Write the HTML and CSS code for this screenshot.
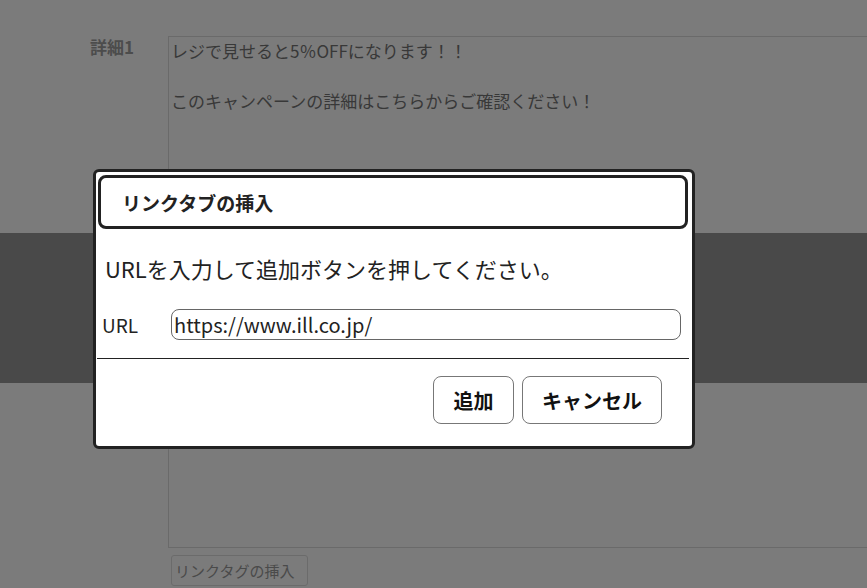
FILE: index.html
```html
<!DOCTYPE html>
<html lang="ja">
<head>
<meta charset="utf-8">
<link rel="stylesheet" href="styles.css">
</head>
<body>
<div class="page">
  <div class="form-row">
    <div class="label">詳細1</div>
    <div class="field">
      <div class="textarea">レジで見せると5％OFFになります！！<br><br>このキャンペーンの詳細はこちらからご確認ください！</div>
      <button class="insert-btn">リンクタグの挿入</button>
    </div>
  </div>
  <div class="band"></div>
  <div class="dialog">
    <div class="dialog-header">リンクタブの挿入</div>
    <p class="message">URLを入力して追加ボタンを押してください。</p>
    <div class="url-row">
      <span class="url-label">URL</span>
      <div class="url-input">https://www.ill.co.jp/</div>
    </div>
    <hr class="divider">
    <div class="actions">
      <button class="btn btn-add">追加</button>
      <button class="btn btn-cancel">キャンセル</button>
    </div>
  </div>
</div>
</body>
</html>
```
FILE: styles.css
```css
* { box-sizing: border-box; }
html, body { margin: 0; padding: 0; }
body {
  width: 867px;
  height: 588px;
  overflow: hidden;
  background: #7b7b7b;
  font-family: "Noto Sans CJK JP", "Noto Sans", sans-serif;
}
.page { position: relative; width: 867px; height: 588px; }
.form-row {
  display: grid;
  grid-template-columns: 78px 1fr;
  padding: 36px 0 0 90px;
}
.label {
  font-size: 17px;
  font-weight: bold;
  color: #4c4c4c;
  line-height: 20px;
  padding-top: 1px;
}
.field { display: flex; flex-direction: column; align-items: flex-start; }
.textarea {
  width: 720px;
  height: 512px;
  border: 1px solid #6a6a6a;
  border-right: none;
  padding: 1px 2px;
  font-size: 17px;
  line-height: 25px;
  color: #383838;
}
.insert-btn {
  margin: 7px 0 0 3px;
  width: 137px;
  height: 31px;
  border: 1px solid #6b6b6b;
  border-radius: 3px;
  background: transparent;
  font-family: inherit;
  font-size: 15px;
  color: #4a4a4a;
  padding: 0 0 0 3px;
  text-align: left;
  white-space: nowrap;
}
.band {
  position: absolute;
  left: 0; top: 233px;
  width: 867px; height: 150px;
  background: #494949;
}
.dialog {
  position: absolute;
  left: 93px; top: 169px;
  width: 602px; height: 280px;
  background: #fff;
  border: 3px solid #222;
  border-radius: 6px;
  display: flex;
  flex-direction: column;
}
.dialog-header {
  margin: 3px 4px 0 2px;
  height: 54px;
  border: 3px solid #222;
  border-radius: 8px;
  padding-left: 21px;
  display: flex;
  align-items: center;
  font-size: 19px;
  font-weight: bold;
  color: #222;
}
.message {
  margin: 24px 0 0 9px;
  font-size: 22px;
  line-height: 30px;
  color: #222;
}
.url-row {
  display: flex;
  align-items: center;
  margin: 26px 0 0 6px;
}
.url-label {
  width: 69px;
  font-size: 19px;
  color: #222;
}
.url-input {
  width: 510px;
  height: 31px;
  border: 1px solid #666;
  border-radius: 8px;
  padding: 0 2px;
  font-size: 20px;
  line-height: 29px;
  color: #222;
}
.divider {
  margin: 18px 3px 0 1px;
  border: none;
  border-top: 1px solid #222;
  height: 0;
}
.actions {
  display: flex;
  justify-content: flex-end;
  gap: 8px;
  margin: 17px 30px 0 0;
}
.btn {
  height: 48px;
  background: #fff;
  border: 1px solid #777;
  border-radius: 8px;
  font-family: inherit;
  font-size: 20px;
  font-weight: bold;
  color: #111;
}
.btn-add { width: 81px; }
.btn-cancel { width: 140px; }
```
